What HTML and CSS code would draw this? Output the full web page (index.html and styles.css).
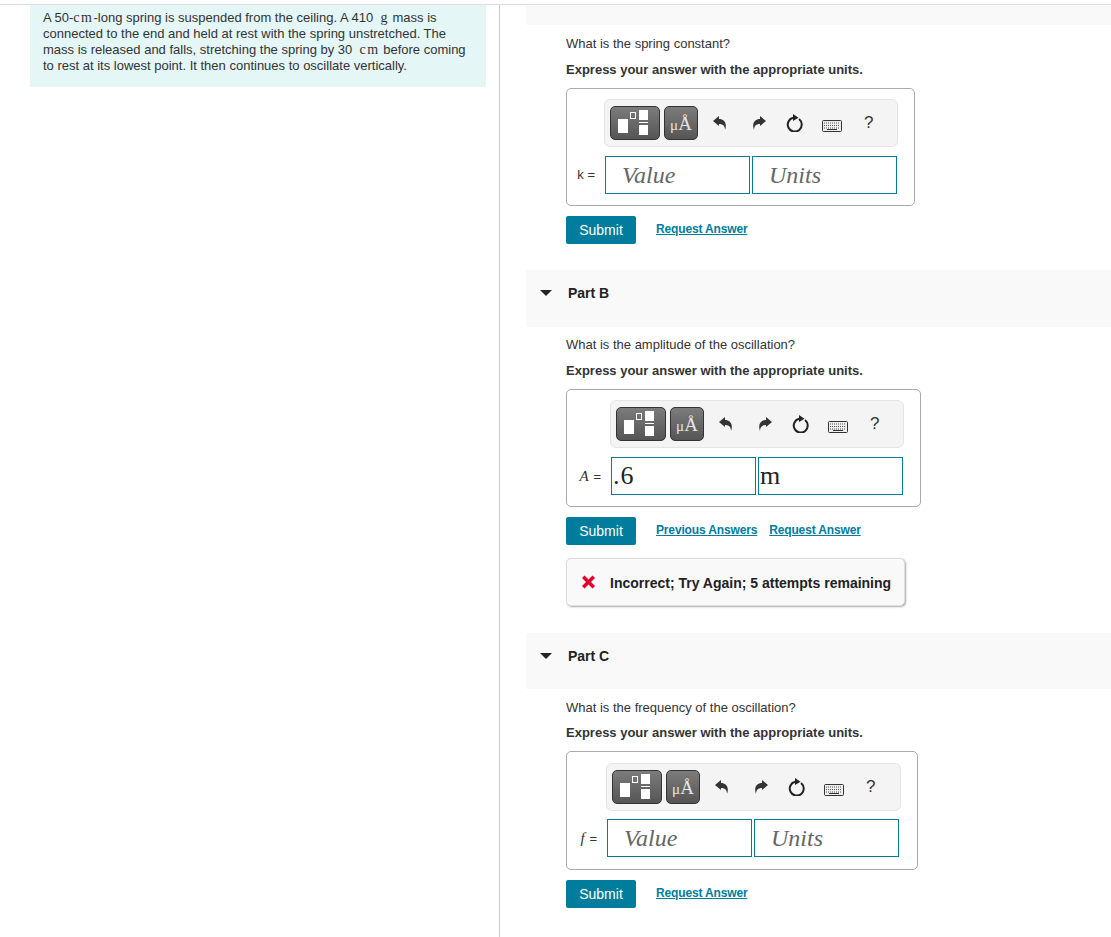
FILE: index.html
```html
<!DOCTYPE html>
<html lang="en">
<head>
  <meta charset="UTF-8" />
  <title>Spring oscillation</title>
  <link rel="stylesheet" href="styles.css">
</head>
<body>
  <div class="page">
    <div class="left-col">
      <div class="intro">
        A 50-<span class="math">cm</span>-long spring is suspended from the ceiling. A 410 &nbsp;<span class="math">g</span> mass is connected to the end and held at rest with the spring unstretched. The mass is released and falls, stretching the spring by 30 &nbsp;<span class="math">cm</span> before coming to rest at its lowest point. It then continues to oscillate vertically.
      </div>
    </div>
    <div class="right-col">
      <div class="part-top"></div>

      <!-- Part A -->
      <div class="part-body part-a">
        <p class="question">What is the spring constant?</p>
        <p class="express">Express your answer with the appropriate units.</p>
        <div class="answer-box box-a">
          <div class="toolbar">
            <span class="tool-btn tool-wide"><svg width="48" height="32" viewBox="0 0 48 32"><rect x="7" y="12" width="10" height="14" fill="#fff"/><rect x="19.5" y="5.5" width="5" height="6" fill="none" stroke="#fff"/><rect x="28" y="3" width="9" height="10" fill="#fff"/><rect x="28" y="15" width="9" height="1" fill="#fff"/><rect x="28" y="18" width="9" height="10" fill="#fff"/></svg></span>
            <span class="tool-btn tool-unit"><span class="mu">μ</span>Å</span>
            <span class="tool-icon tool-undo"><svg width="14" height="14" viewBox="0 0 14 14"><path d="M0 5 L6 0 V3 C11 3 14.500 7 12 14 C12 10 10 8 6 8 V10 Z" fill="#333"/></svg></span>
            <span class="tool-icon tool-redo"><svg width="14" height="14" viewBox="0 0 14 14"><path d="M14 5 L8 0 V3 C3 3 -.5 7 2 14 C2 10 4 8 8 8 V10 Z" fill="#333"/></svg></span>
            <span class="tool-icon tool-reset"><svg width="17" height="18" viewBox="0 0 17 18"><path d="M13 5 A7 7 0 1 1 7 3.800" fill="none" stroke="#222" stroke-width="2"/><path d="M7 0 L12.500 3.800 L7 7 Z" fill="#222"/></svg></span>
            <span class="tool-icon tool-keys"><svg width="20" height="12" viewBox="0 0 20 12"><rect x="0.5" y="0.500" width="19" height="11" rx="1" fill="#eee" stroke="#333"/><path d="M2 3 H18 M2 5.500 H18 M2 8 H18" stroke="#555" stroke-dasharray="1 1" fill="none"/><rect x="5" y="9" width="10" height="1" fill="#333"/></svg></span>
            <span class="tool-help">?</span>
          </div>
          <div class="input-row">
            <span class="var-label">k =</span>
            <span class="math-input placeholder">Value</span>
            <span class="math-input placeholder">Units</span>
          </div>
        </div>
        <div class="actions">
          <span class="submit">Submit</span>
          <a class="link" href="#">Request Answer</a>
        </div>
      </div>

      <!-- Part B -->
      <div class="part-head part-head-b">
        <span class="caret"></span>
        <span class="part-title">Part B</span>
      </div>
      <div class="part-body part-b">
        <p class="question">What is the amplitude of the oscillation?</p>
        <p class="express">Express your answer with the appropriate units.</p>
        <div class="answer-box box-b">
          <div class="toolbar">
            <span class="tool-btn tool-wide"><svg width="48" height="32" viewBox="0 0 48 32"><rect x="7" y="12" width="10" height="14" fill="#fff"/><rect x="19.5" y="5.5" width="5" height="6" fill="none" stroke="#fff"/><rect x="28" y="3" width="9" height="10" fill="#fff"/><rect x="28" y="15" width="9" height="1" fill="#fff"/><rect x="28" y="18" width="9" height="10" fill="#fff"/></svg></span>
            <span class="tool-btn tool-unit"><span class="mu">μ</span>Å</span>
            <span class="tool-icon tool-undo"><svg width="14" height="14" viewBox="0 0 14 14"><path d="M0 5 L6 0 V3 C11 3 14.500 7 12 14 C12 10 10 8 6 8 V10 Z" fill="#333"/></svg></span>
            <span class="tool-icon tool-redo"><svg width="14" height="14" viewBox="0 0 14 14"><path d="M14 5 L8 0 V3 C3 3 -.5 7 2 14 C2 10 4 8 8 8 V10 Z" fill="#333"/></svg></span>
            <span class="tool-icon tool-reset"><svg width="17" height="18" viewBox="0 0 17 18"><path d="M13 5 A7 7 0 1 1 7 3.800" fill="none" stroke="#222" stroke-width="2"/><path d="M7 0 L12.500 3.800 L7 7 Z" fill="#222"/></svg></span>
            <span class="tool-icon tool-keys"><svg width="20" height="12" viewBox="0 0 20 12"><rect x="0.5" y="0.500" width="19" height="11" rx="1" fill="#eee" stroke="#333"/><path d="M2 3 H18 M2 5.500 H18 M2 8 H18" stroke="#555" stroke-dasharray="1 1" fill="none"/><rect x="5" y="9" width="10" height="1" fill="#333"/></svg></span>
            <span class="tool-help">?</span>
          </div>
          <div class="input-row">
            <span class="var-label"><i class="var-name">A</i> =</span>
            <span class="math-input filled">.6</span>
            <span class="math-input filled">m</span>
          </div>
        </div>
        <div class="actions">
          <span class="submit">Submit</span>
          <a class="link" href="#">Previous Answers</a>
          <a class="link link-next" href="#">Request Answer</a>
        </div>
        <div class="feedback">
          <svg width="15" height="14" viewBox="0 0 15 14"><path d="M1 3 L3.500 .5 L7.500 4.500 L11.500 .5 L14 3 L10 7 L14 11 L11.500 13.500 L7.500 9.500 L3.500 13.500 L1 11 L5 7 Z" fill="#e0002b"/></svg>
          <span class="feedback-text">Incorrect; Try Again; 5 attempts remaining</span>
        </div>
      </div>

      <!-- Part C -->
      <div class="part-head part-head-c">
        <span class="caret"></span>
        <span class="part-title">Part C</span>
      </div>
      <div class="part-body part-c">
        <p class="question">What is the frequency of the oscillation?</p>
        <p class="express">Express your answer with the appropriate units.</p>
        <div class="answer-box box-c">
          <div class="toolbar">
            <span class="tool-btn tool-wide"><svg width="48" height="32" viewBox="0 0 48 32"><rect x="7" y="12" width="10" height="14" fill="#fff"/><rect x="19.5" y="5.5" width="5" height="6" fill="none" stroke="#fff"/><rect x="28" y="3" width="9" height="10" fill="#fff"/><rect x="28" y="15" width="9" height="1" fill="#fff"/><rect x="28" y="18" width="9" height="10" fill="#fff"/></svg></span>
            <span class="tool-btn tool-unit"><span class="mu">μ</span>Å</span>
            <span class="tool-icon tool-undo"><svg width="14" height="14" viewBox="0 0 14 14"><path d="M0 5 L6 0 V3 C11 3 14.500 7 12 14 C12 10 10 8 6 8 V10 Z" fill="#333"/></svg></span>
            <span class="tool-icon tool-redo"><svg width="14" height="14" viewBox="0 0 14 14"><path d="M14 5 L8 0 V3 C3 3 -.5 7 2 14 C2 10 4 8 8 8 V10 Z" fill="#333"/></svg></span>
            <span class="tool-icon tool-reset"><svg width="17" height="18" viewBox="0 0 17 18"><path d="M13 5 A7 7 0 1 1 7 3.800" fill="none" stroke="#222" stroke-width="2"/><path d="M7 0 L12.500 3.800 L7 7 Z" fill="#222"/></svg></span>
            <span class="tool-icon tool-keys"><svg width="20" height="12" viewBox="0 0 20 12"><rect x="0.5" y="0.500" width="19" height="11" rx="1" fill="#eee" stroke="#333"/><path d="M2 3 H18 M2 5.500 H18 M2 8 H18" stroke="#555" stroke-dasharray="1 1" fill="none"/><rect x="5" y="9" width="10" height="1" fill="#333"/></svg></span>
            <span class="tool-help">?</span>
          </div>
          <div class="input-row">
            <span class="var-label"><i class="var-name">f</i> =</span>
            <span class="math-input placeholder">Value</span>
            <span class="math-input placeholder">Units</span>
          </div>
        </div>
        <div class="actions">
          <span class="submit">Submit</span>
          <a class="link" href="#">Request Answer</a>
        </div>
      </div>
    </div>
  </div>
</body>
</html>
```

FILE: styles.css
```css
* { box-sizing: border-box; }
html, body {
  margin: 0;
  height: 937px;
  overflow: hidden;
  background-color: #ffffff;
}
body {
  color: #333333;
  font-family: 'Liberation Sans', Arial, sans-serif;
  font-size: 13px;
}
.page {
  display: flex;
  height: 933px;
  margin-top: 4px;
  border-top: 1px solid #dddddd;
}
.left-col {
  width: 500px;
  flex: none;
  padding-left: 30px;
  border-right: 1px solid #c5ccd3;
}
.intro {
  width: 456px;
  height: 82px;
  padding: 5px 13px 0;
  background-color: #e4f6f6;
  line-height: 16px;
}
.math {
  font-family: 'Liberation Serif', serif;
  font-size: 14px;
  letter-spacing: 1.5px;
}
.right-col {
  flex: 1;
  padding-left: 26px;
}
.part-top {
  height: 20px;
  background-color: #f9f9f9;
}
.part-head {
  display: flex;
  align-items: flex-start;
  height: 57px;
  padding: 16px 0 0 14px;
  background-color: #f9f9f9;
}
.part-head-b { margin-top: 26px; }
.part-head-c { margin-top: 27px; height: 56px; }
.caret {
  width: 0;
  height: 0;
  margin-top: 4px;
  border-left: 6px solid transparent;
  border-right: 6px solid transparent;
  border-top: 6px solid #222222;
}
.part-title {
  margin-left: 16px;
  font-size: 14px;
  font-weight: bold;
  color: #222222;
  line-height: 14px;
}
.part-body { padding-left: 40px; }
.question {
  margin: 0;
  padding-top: 10px;
  line-height: 16px;
}
.part-a .question,
.part-c .question { padding-top: 11px; }
.express {
  margin: 10px 0 0;
  font-size: 13px;
  font-weight: bold;
  line-height: 16px;
}
.part-c .express { margin-top: 9px; }
.answer-box {
  height: 118px;
  margin-top: 10px;
  padding-top: 10px;
  border: 1px solid #aaaaaa;
  border-radius: 5px;
}
.box-a { width: 349px; }
.box-b { width: 355px; }
.box-c {
  width: 352px;
  height: 119px;
  padding-top: 11px;
}
.toolbar {
  display: flex;
  align-items: center;
  width: 294px;
  height: 48px;
  padding-left: 5px;
  background-color: #f4f4f4;
  border: 1px solid #e4e4e4;
  border-radius: 6px;
}
.box-a .toolbar { margin-left: 37px; }
.box-b .toolbar { margin-left: 43px; }
.box-c .toolbar { margin-left: 39px; width: 295px; }
.tool-btn {
  display: flex;
  align-items: center;
  justify-content: center;
  height: 34px;
  background: linear-gradient(#7c7c7c, #555555);
  border: 1px solid #333333;
  border-radius: 5px;
  color: #ffffff;
}
.tool-wide { width: 50px; }
.tool-unit {
  align-items: baseline;
  width: 34px;
  margin-left: 4px;
  padding-top: 7px;
  font-family: 'Liberation Serif', serif;
  font-size: 19px;
  line-height: 20px;
  color: #e4e4e4;
}
.mu { font-size: 15px; }
.tool-icon {
  display: flex;
  align-items: center;
  justify-content: center;
}
.tool-undo { margin-left: 15px; }
.tool-redo { margin-left: 25px; }
.tool-reset { margin-left: 20px; }
.tool-keys {
  margin-left: 19px;
  padding-top: 5px;
}
.tool-help {
  margin-left: 22px;
  font-size: 17px;
  color: #333333;
}
.input-row {
  display: flex;
  align-items: center;
  margin-top: 9px;
}
.box-c .input-row { margin-top: 8px; }
.var-label {
  width: 38px;
  padding-right: 10px;
  flex: none;
  text-align: right;
  line-height: 16px;
}
.box-b .var-label { width: 44px; }
.box-c .var-label { width: 40px; }
.var-name {
  margin-right: 1px;
  font-family: 'Liberation Serif', serif;
  font-size: 15px;
}
.math-input {
  display: flex;
  align-items: center;
  width: 145px;
  height: 38px;
  margin-right: 2px;
  border: 1px solid #007c9d;
  font-family: 'Liberation Serif', serif;
  font-size: 24px;
  background-color: #ffffff;
}
.placeholder {
  padding-left: 16px;
  font-style: italic;
  color: #666666;
}
.filled {
  padding-left: 1px;
  font-size: 26px;
  letter-spacing: 1px;
  color: #222222;
}
.actions {
  display: flex;
  align-items: center;
  height: 28px;
  margin-top: 10px;
}
.submit {
  display: flex;
  align-items: center;
  justify-content: center;
  width: 70px;
  height: 28px;
  background-color: #007c9d;
  border-radius: 2px;
  color: #ffffff;
  font-size: 14px;
}
.link {
  margin-left: 20px;
  margin-bottom: 2px;
  color: #007c9d;
  font-size: 12px;
  font-weight: bold;
  letter-spacing: -.15px;
}
.link-next { margin-left: 12px; }
.feedback {
  display: flex;
  align-items: center;
  width: 339px;
  height: 48px;
  margin-top: 13px;
  padding-left: 14px;
  background-color: #f9f9f9;
  border: 1px solid #dddddd;
  border-radius: 5px;
  box-shadow: 1px 1px 2px #aaaaaa;
}
.feedback-text {
  margin-left: 14px;
  padding-top: 2px;
  color: #222222;
  font-size: 14px;
  font-weight: bold;
}
```
